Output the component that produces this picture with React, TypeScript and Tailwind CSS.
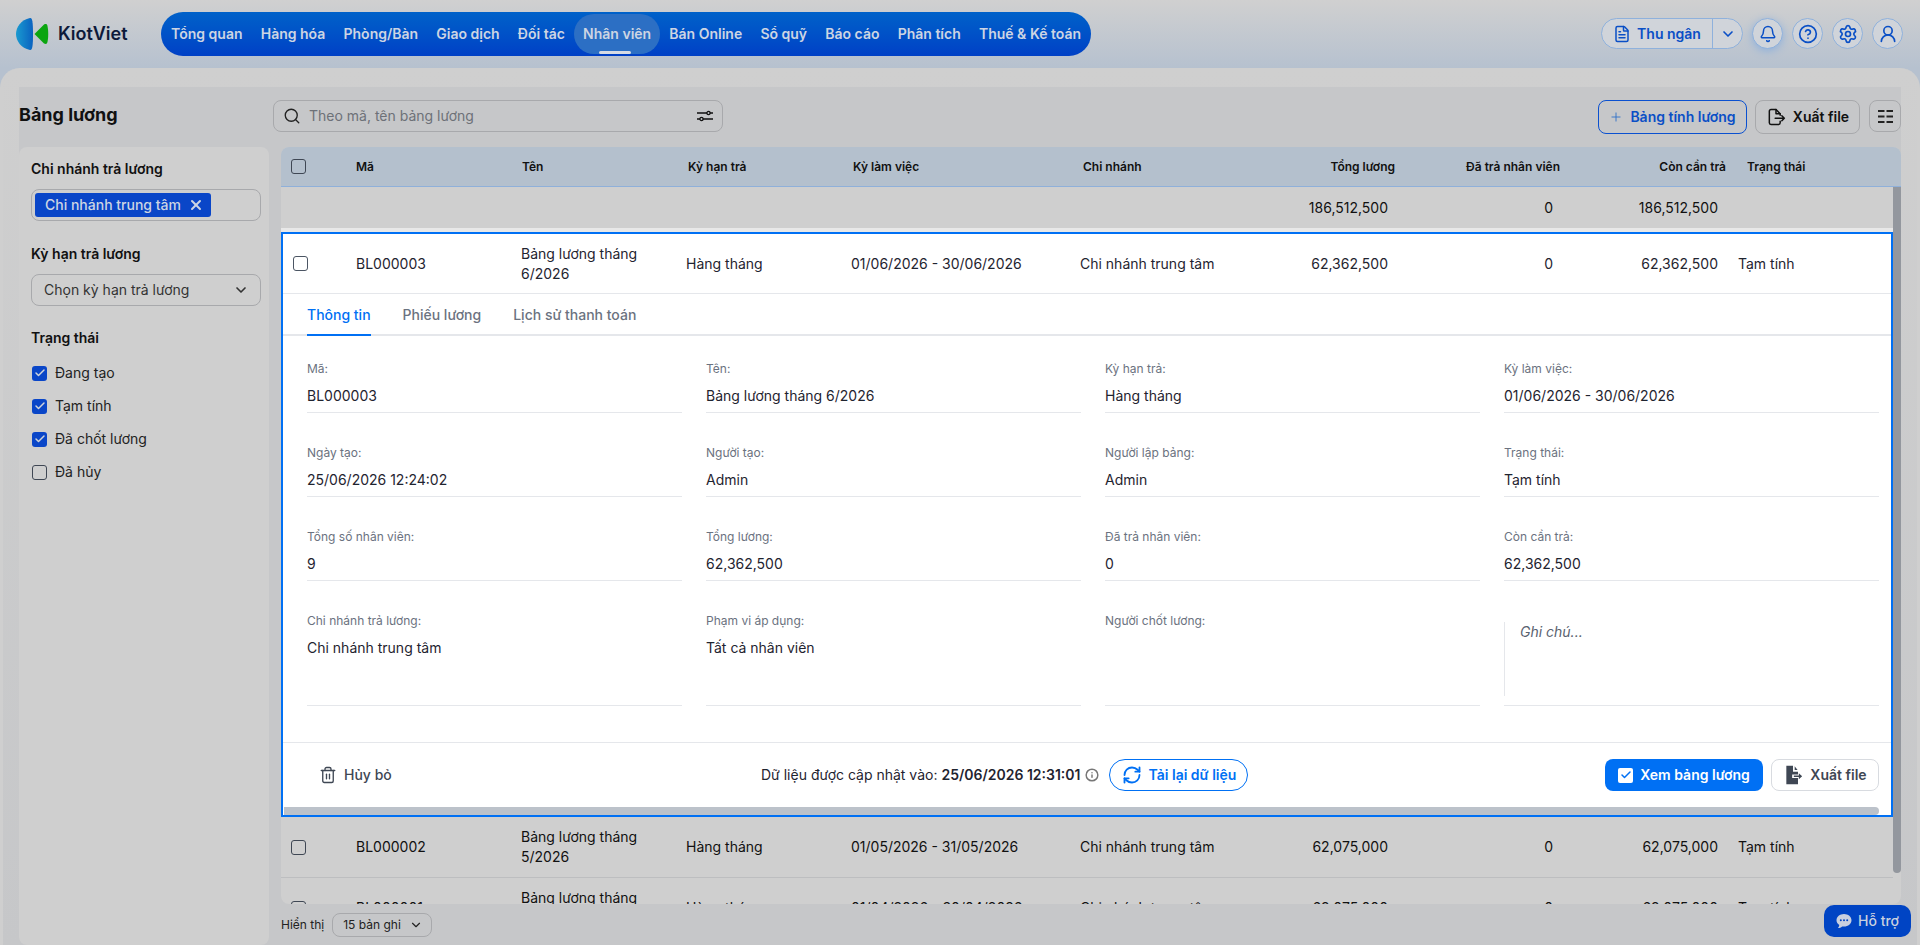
import { Bell, Check, ChevronDown, CircleHelp, FileText, Info, Plus, RefreshCw, Search, Settings, Trash2, UserRound, X } from 'lucide-react'

const NAV_ITEMS = ['Tổng quan', 'Hàng hóa', 'Phòng/Bàn', 'Giao dịch', 'Đối tác', 'Nhân viên', 'Bán Online', 'Sổ quỹ', 'Báo cáo', 'Phân tích', 'Thuế & Kế toán']

const DETAIL_FIELDS = [
  ['Mã:', 'BL000003'],
  ['Tên:', 'Bảng lương tháng 6/2026'],
  ['Kỳ hạn trả:', 'Hàng tháng'],
  ['Kỳ làm việc:', '01/06/2026 - 30/06/2026'],
  ['Ngày tạo:', '25/06/2026 12:24:02'],
  ['Người tạo:', 'Admin'],
  ['Người lập bảng:', 'Admin'],
  ['Trạng thái:', 'Tạm tính'],
  ['Tổng số nhân viên:', '9'],
  ['Tổng lương:', '62,362,500'],
  ['Đã trả nhân viên:', '0'],
  ['Còn cần trả:', '62,362,500'],
]

// column templates differ a little between header, rows and the framed row
const HEAD_COLS = 'grid-cols-[75px_166px_166px_165px_230px_160px_152px_165px_166px_1fr]'
const ROW_COLS = 'grid-cols-[75px_165px_165px_165px_229px_160px_148px_165px_165px_1fr]'
const OPEN_ROW_COLS = 'grid-cols-[73px_165px_165px_165px_229px_160px_148px_165px_165px_1fr]'

function Logo() {
  return (
    <svg width="34" height="32" viewBox="0 0 34 32" className="shrink-0">
      <defs>
        <linearGradient id="kvBlue" x1="0" y1="0" x2="1" y2="0">
          <stop offset="0" stopColor="#1a9ad0" />
          <stop offset="1" stopColor="#0a62c0" />
        </linearGradient>
      </defs>
      <path d="M14 0C5 2 0 9 0 16C0 23 5 30 14 32C16 32.200 17 30 17 16C17 2 16-0.200 14 0Z" fill="url(#kvBlue)" />
      <path d="M18.500 16 28 6.500C30 5.500 31 6 31.500 8C32.500 13 32.500 19 31.500 24C31 26 30 26.500 28 25.500Z" fill="#0ba510" />
    </svg>
  )
}

function ExportIcon({ className }: { className?: string }) {
  return (
    <svg viewBox="0 0 24 24" fill="none" stroke="currentColor" strokeWidth="1.800" strokeLinecap="round" strokeLinejoin="round" className={className}>
      <path d="M17 10V8l-5-5H6a2 2 0 0 0-2 2v14a2 2 0 0 0 2 2h9a2 2 0 0 0 2-2v-2" />
      <path d="M12 3v5h5" />
      <path d="M11 13.500h11m-3-3 3 3-3 3" />
    </svg>
  )
}

function ExportSolidIcon({ className }: { className?: string }) {
  return (
    <svg viewBox="0 0 24 24" className={className} fill="currentColor">
      <path d="M4 1h8v7h6v3.500h-7v4h7V23H4Z" />
      <path d="M14 1.500 17.500 6H14Z" />
      <path d="M13 12.500h6V10l4 3.500-4 3.500v-2.500h-6Z" />
    </svg>
  )
}

function FilterIcon() {
  return (
    <svg width="16" height="16" viewBox="0 0 16 16" fill="none" stroke="#111" strokeWidth="1.300">
      <path d="M0 5h10M13 5h3M0 11h3M6 11h10" />
      <circle cx="11.500" cy="5" r="1.600" />
      <circle cx="4.500" cy="11" r="1.600" />
    </svg>
  )
}

function ColumnsIcon() {
  return (
    <svg width="15" height="15" viewBox="0 0 15 15" stroke="#222" strokeWidth="1.800">
      <path d="M0 2h6.500M8.500 2h6.500M0 7.500h6.500M8.500 7.500h6.500M0 13h6.500M8.500 13h6.500" />
    </svg>
  )
}

function ChatIcon() {
  return (
    <svg width="16" height="16" viewBox="0 0 16 16" className="shrink-0">
      <path d="M8 1c4.200 0 7.500 2.800 7.500 6.300S12.200 13.600 8 13.600c-0.700 0-1.300-0.100-1.900-0.200C5 14.400 3.600 15 2 15c0.800-0.900 1.200-1.800 1.300-2.900C1.600 11 0.500 9.300 0.500 7.300 0.500 3.800 3.800 1 8 1Z" fill="#c9d0df" />
      <circle cx="4.800" cy="7.300" r="1" fill="#0044c4" />
      <circle cx="8" cy="7.300" r="1" fill="#0044c4" />
      <circle cx="11.200" cy="7.300" r="1" fill="#0044c4" />
    </svg>
  )
}

function RoundButton({ children, glow }: { children: React.ReactNode; glow?: boolean }) {
  return (
    <button className={`w-[31px] h-[31px] rounded-full border border-[#8fb1dc] bg-[#d0d4da] text-[#0a4fc6] flex items-center justify-center ${glow ? 'shadow-[0_2px_8px_#8fb1dc]' : ''}`}>
      {children}
    </button>
  )
}

function Box({ checked, dim = true }: { checked?: boolean; dim?: boolean }) {
  if (checked) {
    return (
      <span className="w-[15px] h-[15px] rounded-[3px] bg-[#0a46c8] flex items-center justify-center shrink-0">
        <Check className="w-3 h-3 text-[#d0d4da]" strokeWidth={3} />
      </span>
    )
  }
  return <span className={`block w-[15px] h-[15px] rounded-[3px] border shrink-0 ${dim ? 'border-[#3f4754]' : 'border-[#4b5563] bg-white'}`} />
}

function TopBar() {
  return (
    <header className="h-[68px] shrink-0 bg-gradient-to-b from-[#d0d0d0] to-[#b6c1cf] flex items-start">
      <div className="flex items-center pl-4 pt-[18px] w-[161px] shrink-0">
        <Logo />
        <span className="ml-[8px] text-lg font-semibold text-[#0d1a3a]">KiotViet</span>
      </div>
      <nav className="mt-3 h-11 rounded-[22px] bg-gradient-to-b from-[#0061c9] to-[#0040c6] flex items-center px-[1px]">
        {NAV_ITEMS.map(item => {
          const active = item === 'Nhân viên'
          return (
            <a key={item} className={`relative h-10 flex items-center px-[9.1px] text-sm font-semibold text-[#cdd5e3] whitespace-nowrap ${active ? 'rounded-[20px] bg-[#2c6fc4]' : ''}`}>
              {item}
              {active && <span className="absolute bottom-0 left-[25px] w-8 h-[3px] rounded-sm bg-[#d6dbe4]" />}
            </a>
          )
        })}
      </nav>
      <div className="ml-auto pr-[17px] pt-[18px] flex items-center gap-[9px]">
        <div className="h-[31px] w-[142px] rounded-full border border-[#8fb1dc] bg-[#d0d4da] text-[#0a4fc6] flex items-center">
          <div className="w-[110px] flex items-center justify-center gap-[6px] text-sm font-semibold">
            <FileText className="w-[18px] h-[20px]" strokeWidth={2} />
            Thu ngân
          </div>
          <div className="flex-1 h-full border-l border-[#8fb1dc] flex items-center justify-center">
            <ChevronDown className="w-4 h-4" strokeWidth={2.500} />
          </div>
        </div>
        <RoundButton glow><Bell className="w-[18px] h-[18px]" strokeWidth={2} /></RoundButton>
        <RoundButton><CircleHelp className="w-5 h-5" strokeWidth={2} /></RoundButton>
        <RoundButton><Settings className="w-5 h-5" strokeWidth={2} /></RoundButton>
        <RoundButton><UserRound className="w-5 h-5" strokeWidth={2} /></RoundButton>
      </div>
    </header>
  )
}

function FilterSidebar() {
  return (
    <aside className="w-[250px] shrink-0 flex flex-col">
      <div className="h-[60px] shrink-0 flex items-center">
        <h1 className="text-lg font-bold text-[#111] -mt-[4px]">Bảng lương</h1>
      </div>
      <div className="flex-1 rounded-lg bg-[#cfcfcf] px-3 pt-[12px] text-[#111]">
        <div className="text-sm font-semibold leading-5">Chi nhánh trả lương</div>
        <div className="mt-[10px] h-8 w-[230px] rounded-lg border border-[#a8a9ac] flex items-center pl-[3px]">
          <span className="h-6 w-[176px] rounded-[3px] bg-[#0a46c8] text-[#cdd5e3] text-sm font-medium flex items-center pl-[10px] gap-[7px] whitespace-nowrap">
            Chi nhánh trung tâm
            <X className="w-4 h-4" strokeWidth={3} />
          </span>
        </div>
        <div className="mt-[23px] text-sm font-semibold leading-5">Kỳ hạn trả lương</div>
        <div className="mt-[10px] h-8 w-[230px] rounded-lg border border-[#a8a9ac] flex items-center justify-between pl-3 pr-[11px] text-sm text-[#333]">
          Chọn kỳ hạn trả lương
          <ChevronDown className="w-4 h-4" strokeWidth={2.500} />
        </div>
        <div className="mt-[22px] text-sm font-semibold leading-5">Trạng thái</div>
        <div className="mt-[15px] flex flex-col gap-[13px] text-sm">
          {[['Đang tạo', true], ['Tạm tính', true], ['Đã chốt lương', true], ['Đã hủy', false]].map(([label, on]) => (
            <label key={label as string} className="h-5 flex items-center gap-2 pl-[1px] text-[#222]">
              <Box checked={on as boolean} />
              {label}
            </label>
          ))}
        </div>
      </div>
    </aside>
  )
}

function Toolbar() {
  return (
    <div className="h-[60px] shrink-0 flex items-start pt-[13px]">
      <div className="w-[450px] h-8 rounded-lg border border-[#a8a9ac] flex items-center px-[9px]">
        <Search className="w-[18px] h-[18px] text-[#222]" strokeWidth={1.800} />
        <span className="ml-2 flex-1 text-sm text-[#6d7178]">Theo mã, tên bảng lương</span>
        <FilterIcon />
      </div>
      <div className="ml-auto flex items-start">
        <button className="h-[34px] w-[149px] rounded-lg border border-[#0a50d0] text-[#0a4fc6] text-sm font-semibold flex items-center justify-center gap-[7px]">
          <Plus className="w-[14px] h-[14px] text-[#2a6fc8]" strokeWidth={1.500} />
          Bảng tính lương
        </button>
        <button className="ml-2 h-[34px] w-[105px] rounded-lg border border-[#a8a9ac] text-[#111] text-sm font-semibold flex items-center justify-center gap-[7px]">
          <ExportIcon className="w-5 h-5" />
          Xuất file
        </button>
        <button className="ml-[9px] w-8 h-8 rounded-lg border border-[#a8a9ac] flex items-center justify-center">
          <ColumnsIcon />
        </button>
      </div>
    </div>
  )
}

function TableHead() {
  const labels = ['Mã', 'Tên', 'Kỳ hạn trả', 'Kỳ làm việc', 'Chi nhánh']
  return (
    <div className={`h-10 grid ${HEAD_COLS} items-center bg-[#b4c0cd] border-b border-[#8fb0da] text-xs font-semibold text-[#111]`}>
      <div className="pl-[10px]"><Box /></div>
      {labels.map(l => <div key={l}>{l}</div>)}
      <div className="text-right">Tổng lương</div>
      <div className="text-right">Đã trả nhân viên</div>
      <div className="text-right">Còn cần trả</div>
      <div className="pl-[21px]">Trạng thái</div>
    </div>
  )
}

function RowCells({ code, month, period, total, open }: { code: string; month: string; period: string; total: string; open?: boolean }) {
  return (
    <>
      <div className="pl-[10px]"><Box dim={!open} /></div>
      <div>{code}</div>
      <div className="pr-4 leading-5">Bảng lương tháng {month}</div>
      <div>Hàng tháng</div>
      <div>{period}</div>
      <div>Chi nhánh trung tâm</div>
      <div className="text-right">{total}</div>
      <div className="text-right">0</div>
      <div className="text-right">{total}</div>
      <div className="pl-5">Tạm tính</div>
    </>
  )
}

function DetailField({ label, value }: { label: string; value: string }) {
  return (
    <div className="h-[52px] border-b border-[#e5e7eb]">
      <div className="text-xs leading-4 text-[#6b7280]">{label}</div>
      <div className="mt-[9px] text-sm leading-5 text-[#1f2430]">{value}</div>
    </div>
  )
}

function DetailTallField({ label, value }: { label: string; value?: string }) {
  return (
    <div className="h-[93px] border-b border-[#e5e7eb]">
      <div className="text-xs leading-4 text-[#6b7280]">{label}</div>
      {value && <div className="mt-[9px] text-sm leading-5 text-[#1f2430]">{value}</div>}
    </div>
  )
}

function OpenRow() {
  return (
    <div className="border-2 border-[#0070f4] bg-white h-[585px] flex flex-col">
      <div className={`h-[60px] shrink-0 grid ${OPEN_ROW_COLS} items-center text-sm text-[#1f2430] border-b border-[#e5e7eb]`}>
        <RowCells code="BL000003" month="6/2026" period="01/06/2026 - 30/06/2026" total="62,362,500" open />
      </div>
      <div className="h-[42px] shrink-0 flex gap-8 pl-6 border-b-2 border-[#e5e7eb] text-sm font-medium text-[#6b7280]">
        <div className="h-[42px] flex items-center pt-[2px] border-b-2 border-[#0070f4] text-[#0070f4]">Thông tin</div>
        <div className="flex items-center pt-[2px]">Phiếu lương</div>
        <div className="flex items-center pt-[2px]">Lịch sử thanh toán</div>
      </div>
      <div className="shrink-0 pl-6 pr-3 pt-[25px] pb-9 border-b border-[#e5e7eb]">
        <div className="grid grid-cols-4 gap-x-6 gap-y-8">
          {DETAIL_FIELDS.map(([label, value]) => <DetailField key={label} label={label} value={value} />)}
          <DetailTallField label="Chi nhánh trả lương:" value="Chi nhánh trung tâm" />
          <DetailTallField label="Phạm vi áp dụng:" value="Tất cả nhân viên" />
          <DetailTallField label="Người chốt lương:" />
          <div className="h-[93px] border-b border-[#e5e7eb] pt-[9px]">
            <div className="h-[74px] border-l border-[#e5e7eb] pl-[15px] text-sm italic leading-5 text-[#5a6270]">Ghi chú...</div>
          </div>
        </div>
      </div>
      <div className="flex-1 flex items-center pr-3 text-sm text-[#1f2430]">
        <div className="w-[478px] pl-[36px] flex items-center gap-[7px] font-medium text-[#3f4754]">
          <Trash2 className="w-[18px] h-5" strokeWidth={1.800} />
          Hủy bỏ
        </div>
        <span>Dữ liệu được cập nhật vào:&nbsp;</span>
        <span className="font-semibold">25/06/2026 12:31:01</span>
        <Info className="ml-[5px] w-[14px] h-[14px] text-[#777]" strokeWidth={2.500} />
        <button className="ml-[10px] h-8 w-[139px] rounded-full border border-[#0070f4] text-[#0070f4] font-semibold flex items-center justify-center gap-[7px]">
          <RefreshCw className="w-5 h-5" strokeWidth={2.200} />
          Tải lại dữ liệu
        </button>
        <button className="ml-auto h-8 w-[158px] rounded-lg bg-[#0070f4] text-white font-semibold flex items-center justify-center gap-[7px]">
          <span className="w-[15px] h-[15px] rounded-[2px] bg-white flex items-center justify-center">
            <Check className="w-3 h-3 text-[#0070f4]" strokeWidth={3} />
          </span>
          Xem bảng lương
        </button>
        <button className="ml-2 h-8 w-[108px] rounded-lg border border-[#d8dbe0] text-[#3f4754] font-semibold flex items-center justify-center gap-[7px]">
          <ExportSolidIcon className="w-5 h-5" />
          Xuất file
        </button>
      </div>
      <div className="h-2 shrink-0 mr-3 ml-[1px] rounded-r-full bg-[#bcc2ca]" />
    </div>
  )
}

function PayrollTable() {
  return (
    <div className="relative ml-2 flex-1 min-h-0 rounded-lg overflow-hidden bg-[#cfcfcf]">
      <TableHead />
      <div className="pr-2">
        <div className={`h-[45px] grid ${ROW_COLS} items-center text-sm text-[#111] border-b-4 border-[#e8e8e8]`}>
          <div />
          <div />
          <div />
          <div />
          <div />
          <div />
          <div className="text-right">186,512,500</div>
          <div className="text-right">0</div>
          <div className="text-right">186,512,500</div>
        </div>
        <OpenRow />
        <div className={`h-[61px] grid ${ROW_COLS} items-center text-sm text-[#111] border-b border-[#bdbec0]`}>
          <RowCells code="BL000002" month="5/2026" period="01/05/2026 - 31/05/2026" total="62,075,000" />
        </div>
        <div className={`h-[61px] grid ${ROW_COLS} items-center text-sm text-[#111] border-b border-[#bdbec0]`}>
          <RowCells code="BL000001" month="4/2026" period="01/04/2026 - 30/04/2026" total="62,075,000" />
        </div>
      </div>
      {/* vertical scrollbar thumb */}
      <div className="absolute right-0 top-10 w-2 h-[686px] rounded-b-full bg-[#93979e]" />
    </div>
  )
}

export default function App() {
  return (
    <div className="relative h-[945px] overflow-hidden flex flex-col bg-[#b6c1cf] font-['Inter','Noto_Sans',sans-serif]">
      <TopBar />
      <main className="flex-1 min-h-0 rounded-t-[20px] border-x-[3px] border-[#cfcfcf] bg-gradient-to-b from-[#cfcfcf] to-[#c6c7c9] flex flex-col">
        <div className="h-[19px] shrink-0" />
        <div className="flex-1 min-h-0 flex mx-4 bg-[#c6c7c9]">
          <FilterSidebar />
          <div className="flex-1 min-w-0 ml-1 flex flex-col">
            <Toolbar />
            <PayrollTable />
            <div className="h-[41px] shrink-0 flex items-center ml-2 text-xs text-[#222]">
              Hiển thị
              <span className="ml-2 h-6 w-[100px] rounded-lg border border-[#a8a9ac] flex items-center justify-between pl-[10px] pr-[8px]">
                15 bản ghi
                <ChevronDown className="w-[14px] h-[14px]" />
              </span>
            </div>
          </div>
        </div>
      </main>
      <button className="absolute right-[9px] top-[905px] h-8 w-[87px] rounded-[10px] bg-[#0044c4] text-[#c9d0df] text-sm font-medium flex items-center justify-center gap-[6px]">
        <ChatIcon />
        Hỗ trợ
      </button>
    </div>
  )
}
